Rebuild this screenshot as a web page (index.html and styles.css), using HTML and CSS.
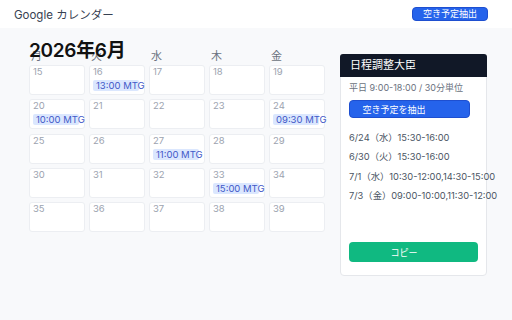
FILE: index.html
```html
<!DOCTYPE html>
<html lang="ja">
  <head>
    <meta charset="utf-8">
    <link rel="stylesheet" href="styles.css">
  </head>
  <body>
    <div class="topbar">
      <div class="app-name">Google カレンダー</div>
      <button class="top-btn">空き予定抽出</button>
    </div>

    <div class="main">
      <div class="calendar">
        <h1 class="month">2026年6月</h1>
        <div class="weekdays">
          <div>月</div><div>火</div><div>水</div><div>木</div><div>金</div>
        </div>
        <div class="grid">
          <div class="cell"><span class="day">15</span></div>
          <div class="cell"><span class="day">16</span><div class="event">13:00 MTG</div></div>
          <div class="cell"><span class="day">17</span></div>
          <div class="cell"><span class="day">18</span></div>
          <div class="cell"><span class="day">19</span></div>

          <div class="cell"><span class="day">20</span><div class="event">10:00 MTG</div></div>
          <div class="cell"><span class="day">21</span></div>
          <div class="cell"><span class="day">22</span></div>
          <div class="cell"><span class="day">23</span></div>
          <div class="cell"><span class="day">24</span><div class="event">09:30 MTG</div></div>

          <div class="cell"><span class="day">25</span></div>
          <div class="cell"><span class="day">26</span></div>
          <div class="cell"><span class="day">27</span><div class="event">11:00 MTG</div></div>
          <div class="cell"><span class="day">28</span></div>
          <div class="cell"><span class="day">29</span></div>

          <div class="cell"><span class="day">30</span></div>
          <div class="cell"><span class="day">31</span></div>
          <div class="cell"><span class="day">32</span></div>
          <div class="cell"><span class="day">33</span><div class="event">15:00 MTG</div></div>
          <div class="cell"><span class="day">34</span></div>

          <div class="cell"><span class="day">35</span></div>
          <div class="cell"><span class="day">36</span></div>
          <div class="cell"><span class="day">37</span></div>
          <div class="cell"><span class="day">38</span></div>
          <div class="cell"><span class="day">39</span></div>
        </div>
      </div>

      <div class="panel">
        <div class="panel-head">日程調整大臣</div>
        <p class="panel-sub">平日 9:00-18:00 / 30分単位</p>
        <button class="extract-btn">空き予定を抽出</button>
        <ul class="slots">
          <li>6/24（水）15:30-16:00</li>
          <li>6/30（火）15:30-16:00</li>
          <li>7/1（水）10:30-12:00,14:30-15:00</li>
          <li>7/3（金）09:00-10:00,11:30-12:00</li>
        </ul>
        <button class="copy-btn">コピー</button>
      </div>
    </div>
  </body>
</html>
```

FILE: styles.css
```css
body {
  margin: 0;
  height: 320px;
  background-color: #f8f9fb;
  font-family: Inter, "Noto Sans CJK JP", sans-serif;
  color: #374151;
}

button {
  font-family: inherit;
  cursor: pointer;
}

.topbar {
  height: 28px;
  background-color: #fff;
  display: flex;
  justify-content: space-between;
  align-items: center;
  padding: 0 24px 0 14px;
}

.app-name {
  font-size: 11.5px;
  color: #374151;
}

.top-btn {
  width: 76px;
  height: 14px;
  padding: 0;
  font-size: 9px;
  line-height: 12px;
  color: #fff;
  background-color: #2563eb;
  border: 1px solid #1e4fd0;
  border-radius: 4px;
}

.main {
  display: flex;
  align-items: flex-start;
  gap: 15px;
  padding: 11px 0 0 29px;
}

.calendar {
  width: 296px;
}

.month {
  position: relative;
  z-index: 1;
  margin: 2px 0 -12px;
  font-size: 19px;
  line-height: 20px;
  font-weight: 600;
  letter-spacing: -0.3px;
  color: #111;
}

.weekdays {
  display: grid;
  grid-template-columns: repeat(5, 56px);
  column-gap: 4px;
  height: 14px;
  margin-bottom: 2px;
  font-size: 11px;
  line-height: 14px;
  color: #6b7280;
}

.weekdays div {
  padding-left: 2px;
}

.grid {
  display: grid;
  grid-template-columns: repeat(5, 56px);
  grid-auto-rows: 30px;
  column-gap: 4px;
  row-gap: 4.3px;
}

.cell {
  box-sizing: border-box;
  background-color: #fff;
  border: 1px solid #eceef2;
  border-radius: 3px;
  padding: 0 3px;
}

.day {
  display: block;
  font-size: 9.5px;
  line-height: 11px;
  color: #9ca3af;
}

.event {
  box-sizing: border-box;
  width: 46px;
  margin-top: 3px;
  padding: 0 3px;
  font-size: 9.5px;
  line-height: 11px;
  white-space: nowrap;
  color: #4259c8;
  background-color: #dbe7fe;
  border-radius: 2px;
}

.panel {
  box-sizing: border-box;
  width: 147px;
  height: 222px;
  margin-top: 15px;
  display: flex;
  flex-direction: column;
  align-items: flex-start;
  padding: 0 8px 13px;
  background-color: #fff;
  border: 1px solid #e5e7eb;
  border-radius: 4px;
}

.panel-head {
  align-self: stretch;
  margin: -1px -9px 0;
  height: 23px;
  padding: 0 10px;
  font-size: 11px;
  line-height: 23px;
  color: #fff;
  background-color: #111827;
  border-radius: 3px 3px 0 0;
}

.panel-sub {
  margin: 5px 0 0;
  font-size: 9px;
  line-height: 12px;
  color: #6b7280;
  white-space: nowrap;
}

.extract-btn {
  width: 121px;
  height: 18px;
  margin-top: 6px;
  padding: 0 31px 0 0;
  font-size: 9px;
  color: #fff;
  background-color: #2563eb;
  border: 1px solid #1e4fd0;
  border-radius: 4px;
}

.slots {
  list-style: none;
  margin: 10px 0 0;
  padding: 0;
  font-size: 9.3px;
  line-height: 19.3px;
  white-space: nowrap;
  color: #4b5563;
}

.copy-btn {
  align-self: stretch;
  height: 20px;
  margin-top: auto;
  padding: 0 19px 0 0;
  font-size: 9px;
  color: #fff;
  background-color: #10b981;
  border: none;
  border-radius: 4px;
}
```
